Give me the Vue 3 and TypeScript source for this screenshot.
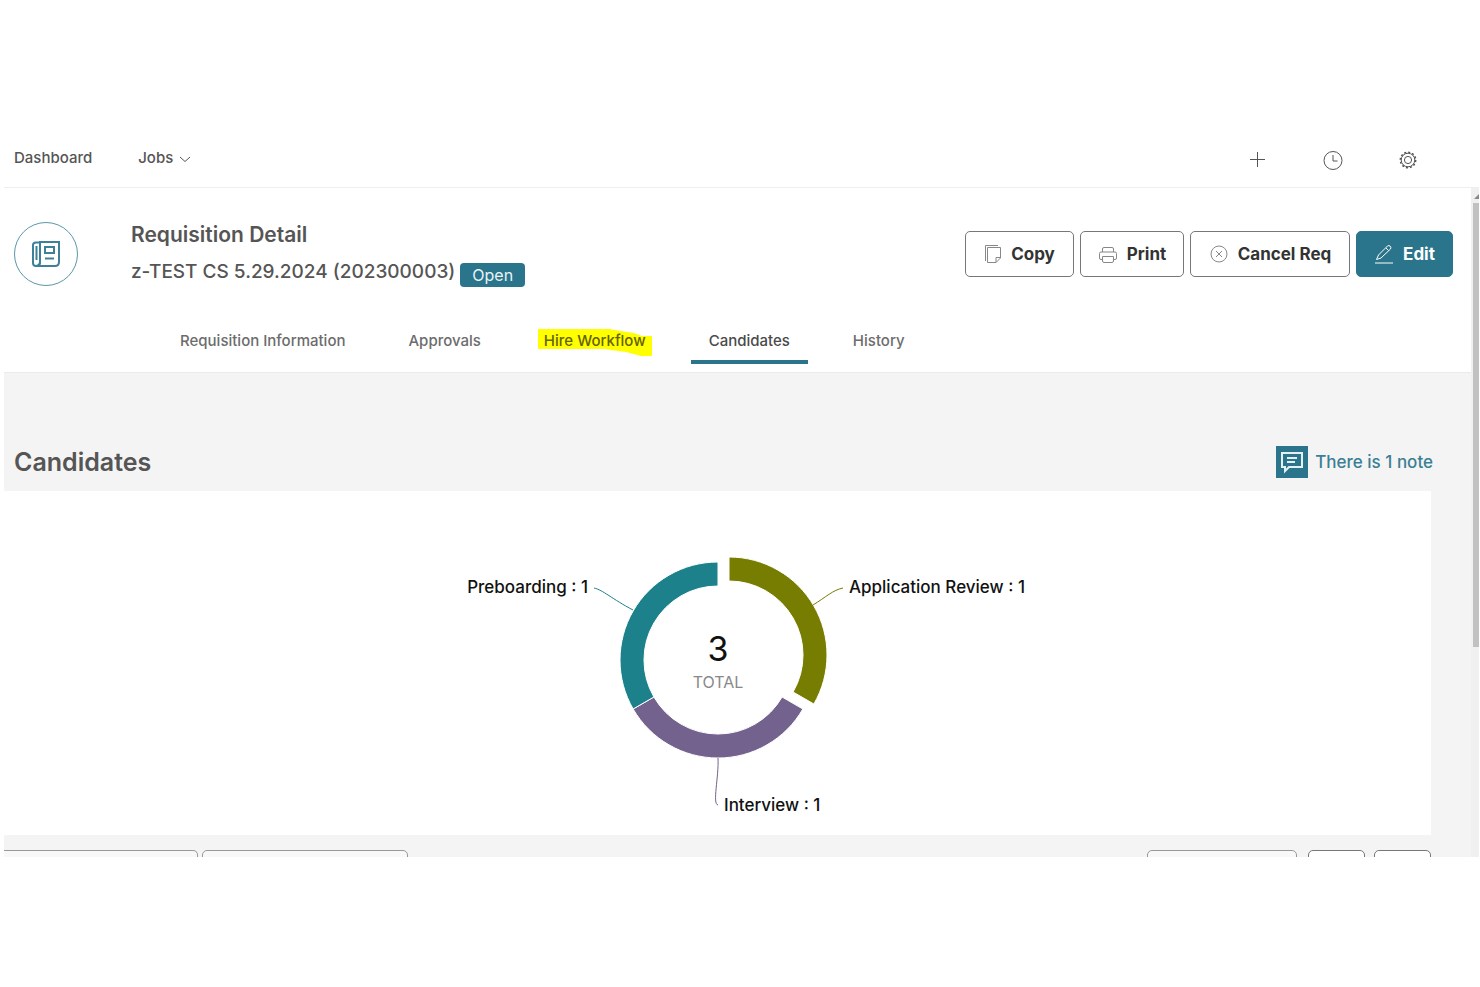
<script setup lang="ts">
interface Tab {
  label: string
  active?: boolean
  marked?: boolean
}

interface Slice {
  name: string
  count: number
  color: string
  shiftX: number
  shiftY: number
  leader: string
  labelX: number
  labelY: number
  anchor: 'start' | 'end'
}

const tabs: Tab[] = [
  { label: 'Requisition Information' },
  { label: 'Approvals' },
  { label: 'Hire Workflow', marked: true },
  { label: 'Candidates', active: true },
  { label: 'History' },
]

const slices: Slice[] = [
  { name: 'Application Review', count: 1, color: '#767d00', shiftX: 11, shiftY: -5, leader: 'M396 114 C409 106 416 99 426 97', labelX: 432, labelY: 102, anchor: 'start' },
  { name: 'Interview', count: 1, color: '#74628e', shiftX: 0, shiftY: 0, leader: 'M301 267 C302 286 295 313 301 314', labelX: 307, labelY: 320, anchor: 'start' },
  { name: 'Preboarding', count: 1, color: '#1c818a', shiftX: 0, shiftY: 0, leader: 'M177 97 C186 99 195 108 216 119', labelX: 171, labelY: 102, anchor: 'end' },
]

const cx = 301
const cy = 169
const outer = 98
const inner = 74
const total = slices.reduce((sum, s) => sum + s.count, 0)

function point(radius: number, angle: number): string {
  return `${(cx + radius * Math.sin(angle)).toFixed(2)} ${(cy - radius * Math.cos(angle)).toFixed(2)}`
}

function arc(index: number): string {
  const before = slices.slice(0, index).reduce((sum, s) => sum + s.count, 0)
  const start = (before / total) * Math.PI * 2
  const end = ((before + slices[index].count) / total) * Math.PI * 2
  return `M${point(outer, start)} A${outer} ${outer} 0 0 1 ${point(outer, end)} L${point(inner, end)} A${inner} ${inner} 0 0 0 ${point(inner, start)} Z`
}
</script>

<template>
  <div class="app">
    <header class="topbar">
      <nav class="menu" aria-label="Main">
        <a href="#">Dashboard</a>
        <a href="#">
          Jobs
          <svg class="chevron" width="12" height="7" viewBox="0 0 12 7"><path d="M1 1 L6 5.500 L11 1" /></svg>
        </a>
      </nav>
      <div class="tools">
        <button type="button" aria-label="Add">
          <svg width="20" height="20" viewBox="0 0 20 20"><path d="M9.500 2V17M2 9.500H17" /></svg>
        </button>
        <button type="button" aria-label="Recent">
          <svg width="20" height="20" viewBox="0 0 20 20"><circle cx="10" cy="10.500" r="9" /><path d="M10 5V11H14.500" /></svg>
        </button>
        <button type="button" aria-label="Settings">
          <svg width="20" height="20" viewBox="0 0 20 20">
            <circle cx="10" cy="10" r="6.800" /><circle cx="10" cy="10" r="3.600" />
            <circle cx="10" cy="10" r="7.700" stroke-dasharray="2 2.032" stroke-width="1.500" />
          </svg>
        </button>
      </div>
    </header>

    <div class="scroller">
      <main class="page">
        <section class="detail">
          <div class="summary">
            <div class="badge-icon">
              <svg width="28" height="26" viewBox="0 0 28 26">
                <path d="M8 1H27V21Q27 25 23 25H4Q8 25 8 21Z" />
                <path d="M8 1.500H4Q1 1.500 1 4V22Q1 25 4 25Q8 25 8 21" />
                <path d="M4.500 5V19" />
                <path d="M13 6H22V12H13ZM13 17.500H22" />
              </svg>
            </div>
            <div class="titles">
              <h1>Requisition Detail</h1>
              <p>z-TEST CS 5.29.2024 (202300003) <span class="status">Open</span></p>
            </div>
            <div class="actions">
              <button type="button" class="copy">
                <svg width="18" height="20" viewBox="0 0 18 20">
                  <path d="M3.500 3.500H16.500V14L12 18.500H3.500ZM16.500 13.500H12V18.500" /><path d="M1.500 17V1.500H14" />
                </svg>
                Copy
              </button>
              <button type="button" class="print">
                <svg width="20" height="20" viewBox="0 0 20 20">
                  <path d="M4.500 8V5Q4.500 3.500 6 3.500H14Q15.500 3.500 15.500 5V8M4.500 15.500H3Q1.500 15.500 1.500 14V9.500Q1.500 8 3 8H17Q18.500 8 18.500 9.500V14Q18.500 15.500 17 15.500H15.500M4.500 12.500H15.500V17Q15.500 18.500 14 18.500H6Q4.500 18.500 4.500 17Z" />
                </svg>
                Print
              </button>
              <button type="button" class="cancel">
                <svg width="20" height="20" viewBox="0 0 20 20">
                  <circle cx="10" cy="10" r="8" /><path d="M7 7L13 13M13 7L7 13" />
                </svg>
                Cancel Req
              </button>
              <button type="button" class="edit">
                <svg width="20" height="20" viewBox="0 0 20 20">
                  <path d="M2.500 15.500L4.500 11L13.500 2Q15 1 16 2Q17.500 3.500 16.500 5L7 14ZM12 4L14.500 6.500M1 19H19" />
                </svg>
                Edit
              </button>
            </div>
          </div>
          <nav class="tabs" aria-label="Requisition">
            <a v-for="tab in tabs" :key="tab.label" href="#" :class="{ active: tab.active }">
              <svg v-if="tab.marked" class="marker" width="115" height="28" viewBox="0 0 115 28">
                <path d="M0 0H71L83 2L96 4L104 7H114V27H103L88 23L66 20H0Z" />
              </svg>
              <span>{{ tab.label }}</span>
            </a>
          </nav>
        </section>

        <section class="candidates">
          <div class="heading">
            <h2>Candidates</h2>
            <a href="#" class="note">
              <span class="note-icon">
                <svg width="24" height="24" viewBox="0 0 24 24">
                  <path d="M2 3H22V17H9L5 21V17H2ZM7 8H17M7 12H15" />
                </svg>
              </span>
              There is 1 note
            </a>
          </div>
          <div class="card">
            <svg class="chart" width="701" height="344" viewBox="-50 0 701 344" role="img">
              <g v-for="(slice, i) in slices" :key="slice.name">
                <path class="slice" :d="arc(i)" :fill="slice.color" :transform="`translate(${slice.shiftX} ${slice.shiftY})`" />
                <path class="leader" :d="slice.leader" :stroke="slice.color" />
                <text class="label" :x="slice.labelX" :y="slice.labelY" :text-anchor="slice.anchor">{{ slice.name }} : {{ slice.count }}</text>
              </g>
              <text class="total" :x="cx" y="170" text-anchor="middle">{{ total }}</text>
              <text class="caption" :x="cx" y="197" text-anchor="middle">TOTAL</text>
            </svg>
          </div>
          <div class="toolbar">
            <button type="button" class="wide first" aria-label="Actions"></button>
            <button type="button" class="wide" aria-label="Filters"></button>
            <button type="button" class="medium" aria-label="View"></button>
            <button type="button" class="small" aria-label="Previous"></button>
            <button type="button" class="small" aria-label="Next"></button>
          </div>
        </section>
      </main>
      <div class="track" aria-hidden="true">
        <svg class="arrow" width="8" height="15" viewBox="0 0 8 15"><path d="M3 11L8 6V11Z" /></svg>
        <div class="thumb"></div>
      </div>
    </div>
  </div>
</template>

<style>
body {
  margin: 0;
  background: #fff;
}
</style>

<style scoped>
.app {
  margin: 130px 1px 0 4px;
  font-family: Inter, Roboto, sans-serif;
  font-weight: 500;
  color: #555;
}
a {
  color: inherit;
  text-decoration: none;
}
svg {
  fill: none;
  stroke: currentColor;
  flex: none;
}
button {
  font: inherit;
  color: inherit;
  box-sizing: border-box;
}
h1, h2, p {
  margin: 0;
  font-weight: 500;
}
h1, h2 {
  font-weight: 600;
}
.topbar {
  display: flex;
  justify-content: space-between;
  align-items: center;
  box-sizing: border-box;
  height: 58px;
  padding: 0 61px 2px 10px;
  border-bottom: 1px solid #eee;
}
.menu {
  display: flex;
  gap: 46px;
  font-size: 15px;
  line-height: 20px;
}
.menu a {
  display: flex;
  align-items: center;
  gap: 6px;
}
.chevron {
  margin-top: 4px;
}
.tools {
  display: flex;
  gap: 55px;
  margin-top: 4px;
}
.tools button {
  display: flex;
  padding: 0;
  border: 0;
  background: none;
}
.scroller {
  display: flex;
}
.page {
  flex: 1;
  min-width: 0;
}
.detail {
  border-bottom: 1px solid #eaeaea;
}
.summary {
  display: flex;
  align-items: center;
  padding: 29px 18px 0 10px;
}
.badge-icon {
  display: flex;
  align-items: center;
  justify-content: center;
  box-sizing: border-box;
  width: 64px;
  height: 64px;
  border: 1px solid #5c96a8;
  border-radius: 50%;
  color: #3d8199;
}
.badge-icon svg {
  stroke-width: 2;
}
.titles {
  flex: 1;
  margin-left: 53px;
}
h1 {
  font-size: 21px;
  line-height: 36px;
}
.titles p {
  display: flex;
  align-items: center;
  gap: 5px;
  font-size: 19px;
  line-height: 38px;
}
.status {
  margin-top: 6px;
  padding: 0 12px;
  border-radius: 4px;
  background: #2a758c;
  color: #e8f3f6;
  font-size: 16px;
  font-weight: 400;
  line-height: 24px;
}
.actions {
  display: flex;
  gap: 6px;
}
.actions button {
  display: flex;
  align-items: center;
  justify-content: center;
  gap: 9px;
  height: 46px;
  padding: 0;
  border: 1px solid #777;
  border-radius: 5px;
  background: #fff;
  color: #333;
  font-size: 17px;
  font-weight: 700;
}
.actions svg {
  color: #888;
}
.actions .copy {
  width: 109px;
}
.actions .print {
  width: 104px;
}
.actions .cancel {
  width: 160px;
}
.actions .edit {
  width: 97px;
  border-color: #2a758c;
  background: #2a758c;
  color: #fff;
}
.actions .edit svg {
  color: #fff;
}
.tabs {
  display: flex;
  gap: 27px;
  margin: 31px 0 8px 158px;
}
.tabs a {
  position: relative;
  padding: 9px 18px;
  border-bottom: 4px solid transparent;
  color: #6c6c6c;
  font-size: 15px;
  line-height: 20px;
}
.tabs .active {
  border-color: #2a758c;
  color: #4a4a4a;
}
.tabs span {
  position: relative;
}
.marker {
  position: absolute;
  left: 12px;
  top: 7px;
  fill: #ff0;
  stroke: none;
}
.marker + span {
  color: #666200;
}
.candidates {
  padding-top: 73px;
  background: #f4f4f4;
}
.heading {
  display: flex;
  align-items: center;
  justify-content: space-between;
  padding: 0 38px 13px 10px;
}
h2 {
  font-size: 25px;
  line-height: 32px;
}
.note {
  display: flex;
  align-items: center;
  gap: 7px;
  color: #3b7f95;
  font-size: 17px;
}
.note-icon {
  display: flex;
  padding: 4px;
  background: #2a758c;
  color: #e5f0f3;
}
.note-icon svg {
  stroke-width: 2;
}
.card {
  display: flex;
  justify-content: center;
  margin-right: 40px;
  background: #fff;
}
.slice {
  stroke: #fff;
  stroke-width: 1;
}
.label {
  fill: #111;
  stroke: none;
  font-size: 17px;
}
.total {
  fill: #111;
  stroke: none;
  font-size: 34px;
  font-weight: 400;
}
.caption {
  fill: #888;
  stroke: none;
  font-size: 16px;
  font-weight: 400;
}
.toolbar {
  display: flex;
  height: 7px;
  margin-right: 40px;
  padding-top: 15px;
  overflow: hidden;
}
.toolbar button {
  height: 46px;
  padding: 0;
  border: 1px solid #999;
  border-radius: 5px;
  background: #f8f8f8;
}
.toolbar .wide {
  width: 206px;
  margin-right: 4px;
}
.toolbar .first {
  width: 194px;
  border-left: 0;
  border-top-left-radius: 0;
}
.toolbar .medium {
  width: 150px;
  margin-left: auto;
  margin-right: 2px;
}
.toolbar .small {
  width: 57px;
  margin-left: 9px;
  border-color: #777;
  background: #fff;
}
.track {
  width: 8px;
  background: #f0f0f0;
}
.arrow {
  display: block;
  fill: #888;
  stroke: none;
}
.thumb {
  height: 444px;
  margin-left: 2px;
  background: #c1c1c1;
}
</style>
